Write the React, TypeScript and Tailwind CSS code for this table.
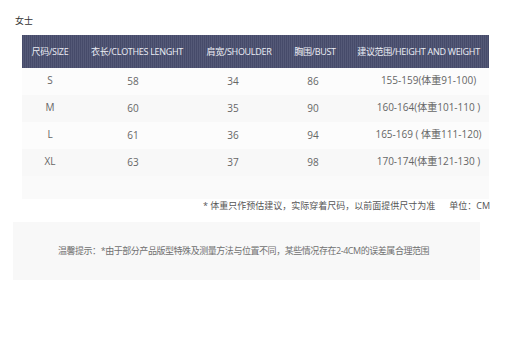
const font = "font-['Open_Sans','Noto_Sans_CJK_SC',sans-serif]";

const headers = ["尺码/SIZE", "衣长/CLOTHES LENGHT", "肩宽/SHOULDER", "胸围/BUST", "建议范围/HEIGHT AND WEIGHT"];

const rows = [
    ["S", "58", "34", "86", "155-159(体重91-100)"],
    ["M", "60", "35", "90", "160-164(体重101-110 )"],
    ["L", "61", "36", "94", "165-169 ( 体重111-120)"],
    ["XL", "63", "37", "98", "170-174(体重121-130 )"],
];

const cols = "grid grid-cols-[56px_118px_86px_66px_1fr]";

export default function App() {
    return (
        <div className={`w-[520px] h-[338px] bg-white ${font}`}>
            <div className="pt-[15px] pl-[15px] text-[9px] leading-[12px] text-[#333]">女士</div>

            {/* Size table */}
            <div className="ml-[22px] mt-[8px] w-[467px]">
                <div
                    className={`${cols} h-[33px] items-center text-[9px] tracking-[-0.3px] text-[#eceef5] bg-[repeating-linear-gradient(90deg,#464b6a_0px,#464b6a_1px,#545977_1px,#545977_2px)]`}
                >
                    {headers.map((h) => (
                        <div key={h} className="text-center whitespace-nowrap">{h}</div>
                    ))}
                </div>

                {rows.map((r, i) => (
                    <div
                        key={r[0]}
                        className={`${cols} h-[27px] items-center text-[10px] text-[#666] ${i % 2 === 0 ? "bg-[#fcfcfc]" : "bg-[#f8f8f8]"}`}
                    >
                        <div className="text-center -mt-[3px]">{r[0]}</div>
                        <div className="text-center -mt-[1px] pr-[8px]">{r[1]}</div>
                        <div className="text-center -mt-[1px] pr-[12px]">{r[2]}</div>
                        <div className="text-center -mt-[1px] pr-[4px]">{r[3]}</div>
                        <div className="text-center -mt-[3px] pl-[20px] whitespace-nowrap">{r[4]}</div>
                    </div>
                ))}
                <div className="h-[23px] bg-[#fafafa]" />
            </div>

            <div className="w-[490px] mt-[1px] flex justify-end text-[9px] leading-[12px] text-[#555] whitespace-nowrap">
                <span>* 体重只作预估建议，实际穿着尺码，以前面提供尺寸为准</span>
                <span className="ml-[14px]">单位：CM</span>
            </div>

            {/* Notice box */}
            <div className="ml-[13px] mt-[10px] w-[467px] h-[58px] bg-[#f8f8f8] flex items-center justify-center pr-[6px] text-[9px] tracking-[-0.45px] text-[#707070] whitespace-nowrap">
                温馨提示：*由于部分产品版型特殊及测量方法与位置不同，某些情况存在2-4CM的误差属合理范围
            </div>
        </div>
    );
}
